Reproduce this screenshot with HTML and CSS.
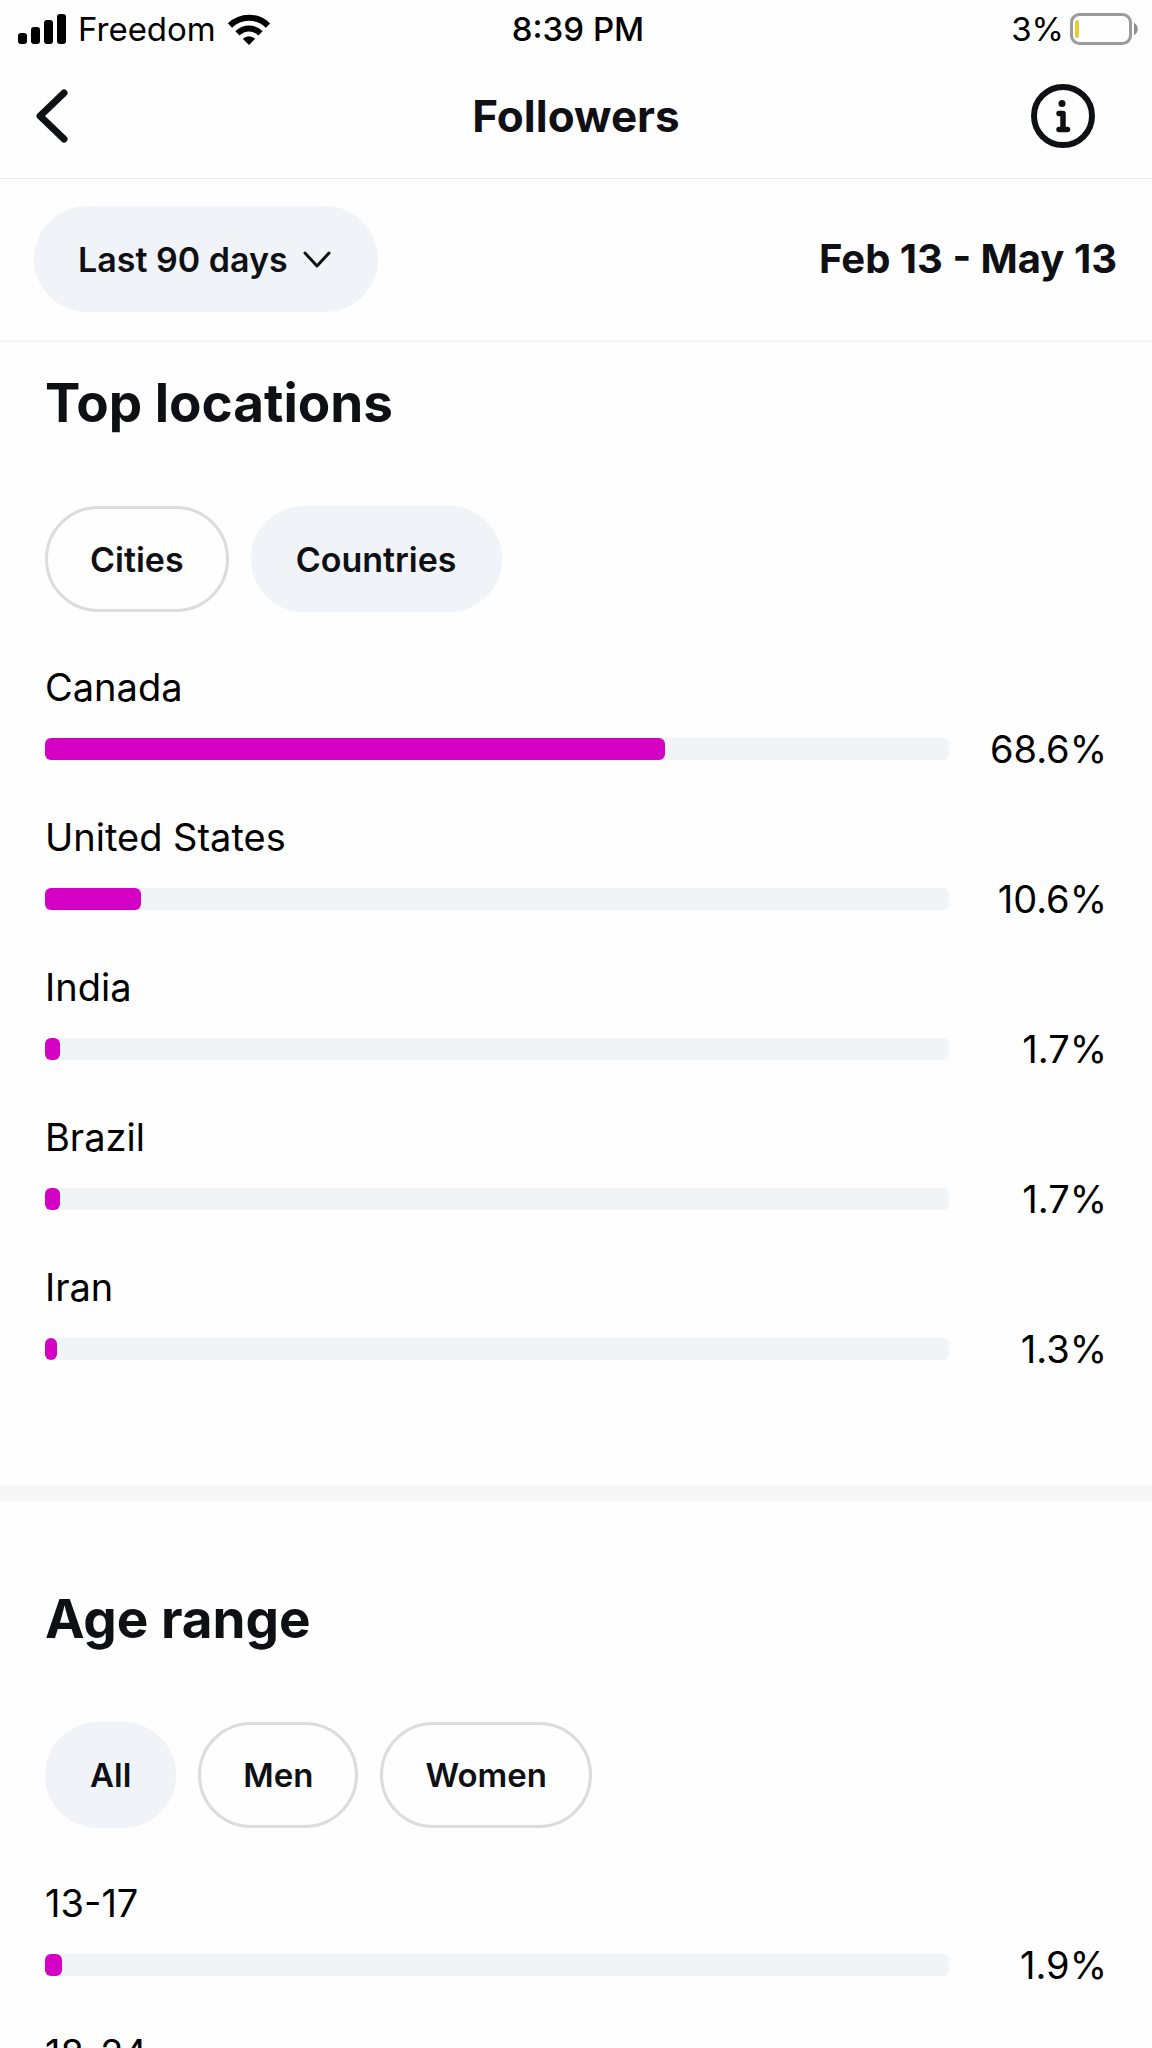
FILE: index.html
```html
<!DOCTYPE html>
<html lang="en">
<head>
<meta charset="utf-8">
<meta name="viewport" content="width=device-width, initial-scale=1">
<title>Followers</title>
<link rel="stylesheet" href="styles.css">
</head>
<body>
<div class="app">
  <div class="status">
    <div class="status-side">
      <svg width="48" height="30" viewBox="0 0 48 30" aria-hidden="true">
        <rect x="0" y="19" width="9" height="11" rx="3"/>
        <rect x="13" y="13" width="9" height="17" rx="3"/>
        <rect x="26" y="6" width="9" height="24" rx="3"/>
        <rect x="39" y="0" width="9" height="30" rx="3"/>
      </svg>
      <span class="carrier">Freedom</span>
      <svg width="42" height="31" viewBox="0 0 42 31" aria-hidden="true">
        <g fill="none" stroke="#000" stroke-width="6">
          <path d="M2 11.500A27 27 0 0 1 40 11.500"/>
          <path d="M9.500 19.300A16.300 16.300 0 0 1 32.500 19.300"/>
        </g>
        <path d="M21 31l-6.200-6.200a8.800 8.800 0 0 1 12.400 0z"/>
      </svg>
    </div>
    <span class="clock">8:39 PM</span>
    <div class="status-side status-end">
      <span>3%</span>
      <svg class="battery" width="68" height="32" viewBox="0 0 68 32" aria-hidden="true">
        <rect x="1.500" y="1.500" width="59" height="29" rx="8" fill="none" stroke="#9b9b9d" stroke-width="3"/>
        <rect x="5" y="7" width="4" height="18" rx="2" fill="#e3cf2f"/>
        <path d="M64 10c5 2 5 10 0 12z" fill="#8f8f91"/>
      </svg>
    </div>
  </div>

  <header class="nav">
    <button class="icon-btn" aria-label="Back">
      <svg width="32" height="54" viewBox="0 0 32 54" aria-hidden="true"><path d="M28 4L4 27l24 23" fill="none" stroke="#0f1014" stroke-width="7" stroke-linecap="round" stroke-linejoin="round"/></svg>
    </button>
    <h1 class="title">Followers</h1>
    <button class="icon-btn icon-end" aria-label="About this page">
      <svg width="64" height="64" viewBox="0 0 64 64" aria-hidden="true">
        <circle cx="32" cy="32" r="29" fill="none" stroke="#0f1014" stroke-width="6"/>
        <circle cx="31" cy="19.500" r="3.500" fill="#0f1014"/>
        <path d="M28 29.500h4V45.500M28 45.500h8.500" fill="none" stroke="#0f1014" stroke-width="5.500" stroke-linecap="round" stroke-linejoin="round"/>
      </svg>
    </button>
  </header>

  <div class="filter">
    <div class="range">
      <select class="range-select" aria-label="Date range"><option>Last 90 days</option></select>
      <svg class="range-arrow" width="28" height="17" viewBox="0 0 28 17" aria-hidden="true"><path d="M2 2l12 13L26 2" fill="none" stroke="#0f1014" stroke-width="3" stroke-linecap="round" stroke-linejoin="round"/></svg>
    </div>
    <span class="dates">Feb 13 - May 13</span>
  </div>

  <main class="content">
    <section class="panel">
      <h2 class="heading">Top locations</h2>
      <div class="pills">
        <button class="pill" aria-pressed="false">Cities</button>
        <button class="pill" aria-pressed="true">Countries</button>
      </div>
      <ul class="rows">
        <li class="row"><span class="label">Canada</span><div class="measure"><div class="track"><div class="fill" style="width:68.6%"></div></div><span class="value">68.6%</span></div></li>
        <li class="row"><span class="label">United States</span><div class="measure"><div class="track"><div class="fill" style="width:10.6%"></div></div><span class="value">10.6%</span></div></li>
        <li class="row"><span class="label">India</span><div class="measure"><div class="track"><div class="fill" style="width:1.7%"></div></div><span class="value">1.7%</span></div></li>
        <li class="row"><span class="label">Brazil</span><div class="measure"><div class="track"><div class="fill" style="width:1.7%"></div></div><span class="value">1.7%</span></div></li>
        <li class="row"><span class="label">Iran</span><div class="measure"><div class="track"><div class="fill" style="width:1.3%"></div></div><span class="value">1.3%</span></div></li>
      </ul>
    </section>
    <section class="panel panel-next">
      <h2 class="heading">Age range</h2>
      <div class="pills pills-compact">
        <button class="pill" aria-pressed="true">All</button>
        <button class="pill" aria-pressed="false">Men</button>
        <button class="pill" aria-pressed="false">Women</button>
      </div>
      <ul class="rows">
        <li class="row"><span class="label">13-17</span><div class="measure"><div class="track"><div class="fill" style="width:1.9%"></div></div><span class="value">1.9%</span></div></li>
        <li class="row"><span class="label">18-24</span></li>
      </ul>
    </section>
  </main>
</div>
</body>
</html>
```
FILE: styles.css
```css
* { box-sizing: border-box; }

body {
  margin: 0;
  background: #fefefe;
  color: #000;
  font-family: Inter, "Liberation Sans", sans-serif;
}

button, select { font: inherit; color: inherit; border: 0; background: none; }
svg { display: block; flex: none; }

.app {
  display: flex;
  flex-direction: column;
  height: 100vh;
}

/* Status bar */
.status {
  display: grid;
  grid-template-columns: 1fr auto 1fr;
  align-items: center;
  padding: 0 14px 0 18px;
  font-size: 33px;
  line-height: 58px;
}
.status-side { display: flex; align-items: center; gap: 12px; }
.status-end { justify-content: flex-end; gap: 6px; }
.clock { font-weight: 500; }

/* Title bar */
.nav {
  display: grid;
  grid-template-columns: 1fr auto 1fr;
  align-items: center;
  height: 121px;
  padding-bottom: 4px;
  border-bottom: 1px solid #e9e9eb;
  color: #0f1014;
}
.icon-btn { padding: 0 36px; justify-self: start; }
.icon-end { padding: 0 57px; justify-self: end; }
.title { margin: 0; font-size: 44px; line-height: 56px; font-weight: 700; }

/* Date filter */
.filter {
  display: flex;
  align-items: center;
  justify-content: space-between;
  padding: 27px 35px 28px 34px;
  border-bottom: 3px solid #f6f6f7;
  color: #0f1014;
}
.range { display: grid; align-items: center; }
.range-select {
  grid-area: 1 / 1;
  appearance: none;
  height: 106px;
  padding: 0 90px 0 44px;
  border-radius: 53px;
  background: #f0f4f8;
  font-size: 34px;
  font-weight: 600;
}
.range-arrow { grid-area: 1 / 1; justify-self: end; margin-right: 47px; pointer-events: none; }
.dates { font-size: 40px; line-height: 48px; font-weight: 700; }

/* Scrolling content */
.content { flex: 1; min-height: 0; overflow-y: auto; scrollbar-width: none; }
.panel { padding: 28px 45px 112px; }
.panel-next { padding-top: 86px; border-top: 16px solid #f7f7f8; }
.heading {
  margin: 0 0 71px;
  color: #0f1014;
  font-size: 53px;
  line-height: 64px;
  font-weight: 700;
}

.pills { display: flex; gap: 22px; margin-bottom: 51px; }
.pill {
  height: 106px;
  padding: 0 42px;
  border: 3px solid #dcdcde;
  border-radius: 53px;
  color: #0f1014;
  font-size: 34px;
  font-weight: 600;
}
.pill[aria-pressed="true"] { border-color: #f0f4f8; background: #f0f4f8; }
.pills-compact .pill { font-size: 33px; }

.rows {
  display: flex;
  flex-direction: column;
  gap: 40px;
  margin: 0;
  padding: 0;
  list-style: none;
  font-size: 38px;
  line-height: 48px;
}
.label { display: block; margin-bottom: 14px; }
.measure { display: flex; align-items: center; }
.track { flex: 1; height: 22px; border-radius: 6px; background: #f1f4f6; }
.fill { height: 22px; border-radius: 6px; background: #d400c4; }
.value { width: 158px; text-align: right; }
```
